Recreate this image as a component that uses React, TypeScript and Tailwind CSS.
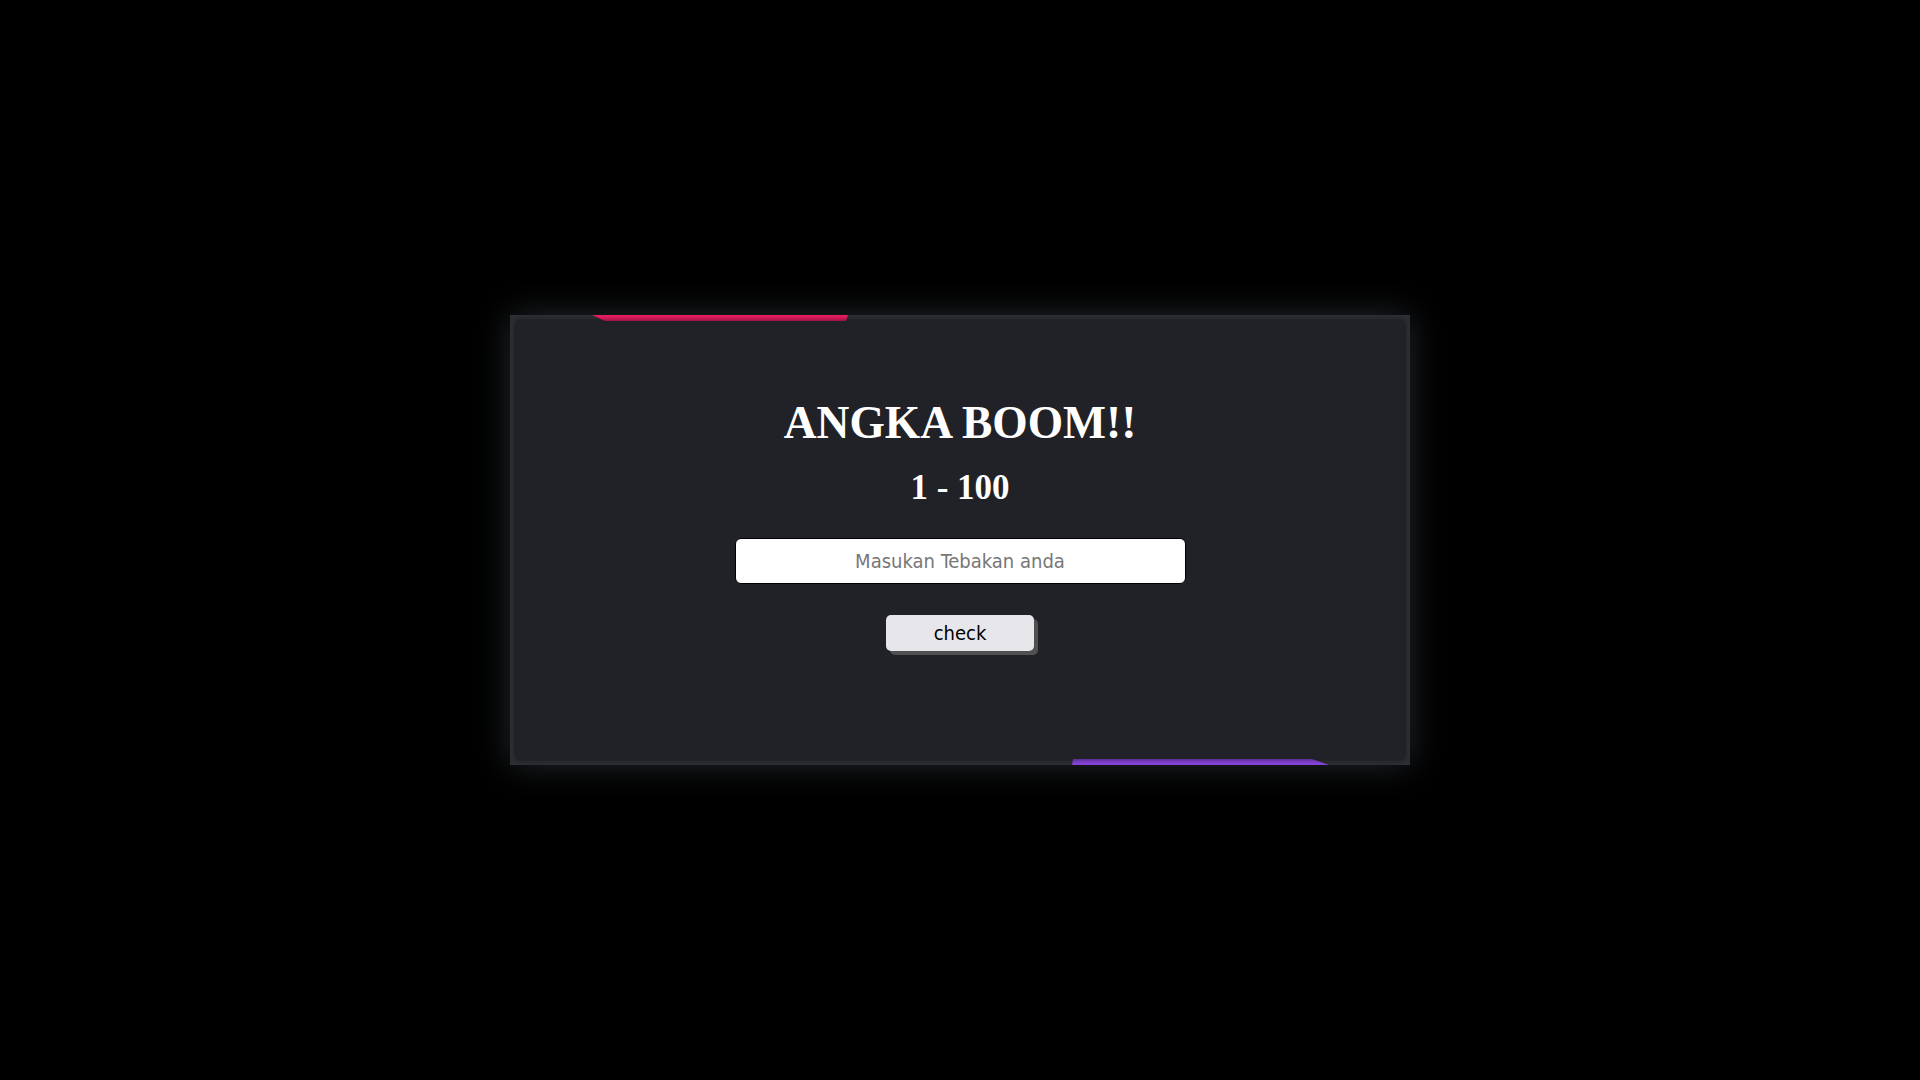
import React, { useState } from 'react';

const App: React.FC = () => {
  const [guess, setGuess] = useState<string>('');

  return (
    <div className="flex h-screen w-full items-center justify-center bg-black">
      <div className="relative h-[450px] w-[900px] bg-[#2e2f34] p-[6px] shadow-[0_0_32px_rgba(62,68,74,0.6)]">
        {/* accent strips on the frame */}
        <span className="absolute left-[82px] top-0 h-[6px] w-[256px] bg-[#e91e63] [clip-path:polygon(0_0,100%_0,99.2%_100%,5%_100%)]" />
        <span className="absolute bottom-0 left-[562px] h-[6px] w-[257px] bg-[#8a45e0] [clip-path:polygon(0.4%_0,93.4%_0,100%_100%,0_100%)]" />

        <div className="relative flex h-full w-full flex-col items-center bg-[#212227] pt-[79px] shadow-[0_0_6px_rgba(0,0,0,0.7)]">
          <h1 className="font-['Liberation_Serif',serif] text-[45.5px] font-bold leading-none text-white">
            ANGKA BOOM!!
          </h1>
          <h2 className="mt-[24px] font-['Liberation_Serif',serif] text-[35px] font-bold leading-none text-white">
            1 - 100
          </h2>
          <input
            type="text"
            value={guess}
            onChange={(e) => setGuess(e.target.value)}
            placeholder="Masukan Tebakan anda"
            className="mt-[33px] h-[46px] w-[451px] rounded-[6px] border border-black bg-white text-center font-['DejaVu_Sans_Condensed','DejaVu_Sans',sans-serif] text-[20px] text-[#333] outline-none placeholder:text-[#777]"
          />
          <button
            type="button"
            className="mt-[31px] h-[36px] w-[148px] rounded-[5px] bg-[#e7e7eb] font-['DejaVu_Sans_Condensed','DejaVu_Sans',sans-serif] text-[20px] text-black shadow-[4px_4px_0_#505050]"
          >
            check
          </button>
        </div>
      </div>
    </div>
  );
};

export default App;
